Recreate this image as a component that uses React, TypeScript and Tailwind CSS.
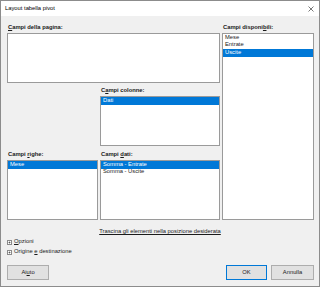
import React from "react";

const font = { fontFamily: '"Liberation Sans", Arial, sans-serif' };

function U({ c }: { c: string }) {
  return <span className="underline decoration-[0.5px] underline-offset-[1px]">{c}</span>;
}

function Label({ children }: { children: React.ReactNode }) {
  return (
    <div className="h-[11px] flex items-center pl-[1px] font-bold text-[5.8px] text-[#1a1a1a] leading-none whitespace-pre">
      {children}
    </div>
  );
}

function Item({ text, sel }: { text: string; sel?: boolean }) {
  return (
    <div
      className={
        "h-[7.5px] flex items-center pl-[2px] text-[5.8px] leading-none " +
        (sel ? "bg-[#0078d7] text-white" : "text-[#1a1a1a]")
      }
    >
      {text}
    </div>
  );
}

function Box({ className, children }: { className: string; children?: React.ReactNode }) {
  return <div className={"bg-white border border-[#9a9a9a] " + className}>{children}</div>;
}

function Expander() {
  return (
    <svg width="5" height="5" viewBox="0 0 5 5" className="shrink-0">
      <rect x="0.5" y="0.5" width="4" height="4" fill="#fff" stroke="#8a8a8a" strokeWidth="1" />
      <path d="M1.5 2.5H3.5M2.5 1.5V3.5" stroke="#333" strokeWidth="0.6" />
    </svg>
  );
}

export default function App() {
  return (
    <div
      className="w-[320px] h-[287px] border border-[#8c8c8c] bg-[#f0f0f0] flex flex-col overflow-hidden"
      style={font}
    >
      <div className="h-[15px] bg-white flex items-center justify-between pl-[4px] pr-[5px] shrink-0">
        <span className="text-[5.8px] text-black leading-none">Layout tabella pivot</span>
        <svg width="6" height="6" viewBox="0 0 6 6">
          <path d="M0.5 0.5L5.5 5.5M5.5 0.5L0.5 5.5" stroke="#555" strokeWidth="0.8" />
        </svg>
      </div>

      <div className="flex gap-[2px] pl-[6px] pr-[5px] pt-[6px]">
        <div className="w-[213px] flex flex-col shrink-0">
          <Label>
            <U c="C" />
            {"ampi della pagina:"}
          </Label>
          <Box className="h-[50px]" />
          <div className="flex gap-[2px] mt-[2px]">
            <div className="w-[91px]" />
            <div className="flex-1 flex flex-col">
              <Label>
                {"C"}
                <U c="a" />
                {"mpi colonne:"}
              </Label>
              <Box className="h-[50px]">
                <Item text="Dati" sel />
              </Box>
            </div>
          </div>
          <div className="flex gap-[2px] mt-[3px]">
            <div className="w-[91px] flex flex-col">
              <Label>
                {"Campi "}
                <U c="r" />
                {"ighe:"}
              </Label>
              <Box className="h-[60px]">
                <Item text="Mese" sel />
              </Box>
            </div>
            <div className="flex-1 flex flex-col">
              <Label>
                {"Campi "}
                <U c="d" />
                {"ati:"}
              </Label>
              <Box className="h-[60px]">
                <Item text="Somma - Entrate" sel />
                <Item text="Somma - Uscite" />
              </Box>
            </div>
          </div>
        </div>
        <div className="flex-1 flex flex-col">
          <Label>
            {"Campi disponi"}
            <U c="b" />
            {"ili:"}
          </Label>
          <Box className="flex-1">
            <Item text="Mese" />
            <Item text="Entrate" />
            <Item text="Uscite" sel />
          </Box>
        </div>
      </div>

      <div className="mt-[7px] h-[10px] flex items-center justify-center text-[5.8px] text-[#1a1a1a] leading-none">
        <span className="underline decoration-[0.5px] underline-offset-[1px]">
          Trascina gli elementi nella posizione desiderata
        </span>
      </div>
      <div className="h-[10px] flex items-center gap-[2px] pl-[6px] text-[5.8px] text-[#1a1a1a] leading-none whitespace-pre">
        <Expander />
        <span>
          <U c="O" />
          {"pzioni"}
        </span>
      </div>
      <div className="h-[10px] flex items-center gap-[2px] pl-[6px] text-[5.8px] text-[#1a1a1a] leading-none whitespace-pre">
        <Expander />
        <span>
          {"Origine "}
          <U c="e" />
          {" destinazione"}
        </span>
      </div>

      <div className="mt-[8px] flex pl-[6px] pr-[5px] items-center">
        <button className="w-[42px] h-[15px] bg-[#e1e1e1] border border-[#adadad] text-[5.8px] text-[#1a1a1a] leading-none flex items-center justify-center whitespace-pre">
          {"Ai"}
          <U c="u" />
          {"to"}
        </button>
        <div className="flex-1" />
        <button className="w-[41px] h-[15px] bg-[#e1e1e1] border border-[#0078d7] text-[5.8px] text-[#1a1a1a] leading-none flex items-center justify-center">
          OK
        </button>
        <button className="ml-[4px] w-[43px] h-[15px] bg-[#e1e1e1] border border-[#adadad] text-[5.8px] text-[#1a1a1a] leading-none flex items-center justify-center">
          Annulla
        </button>
      </div>
    </div>
  );
}
